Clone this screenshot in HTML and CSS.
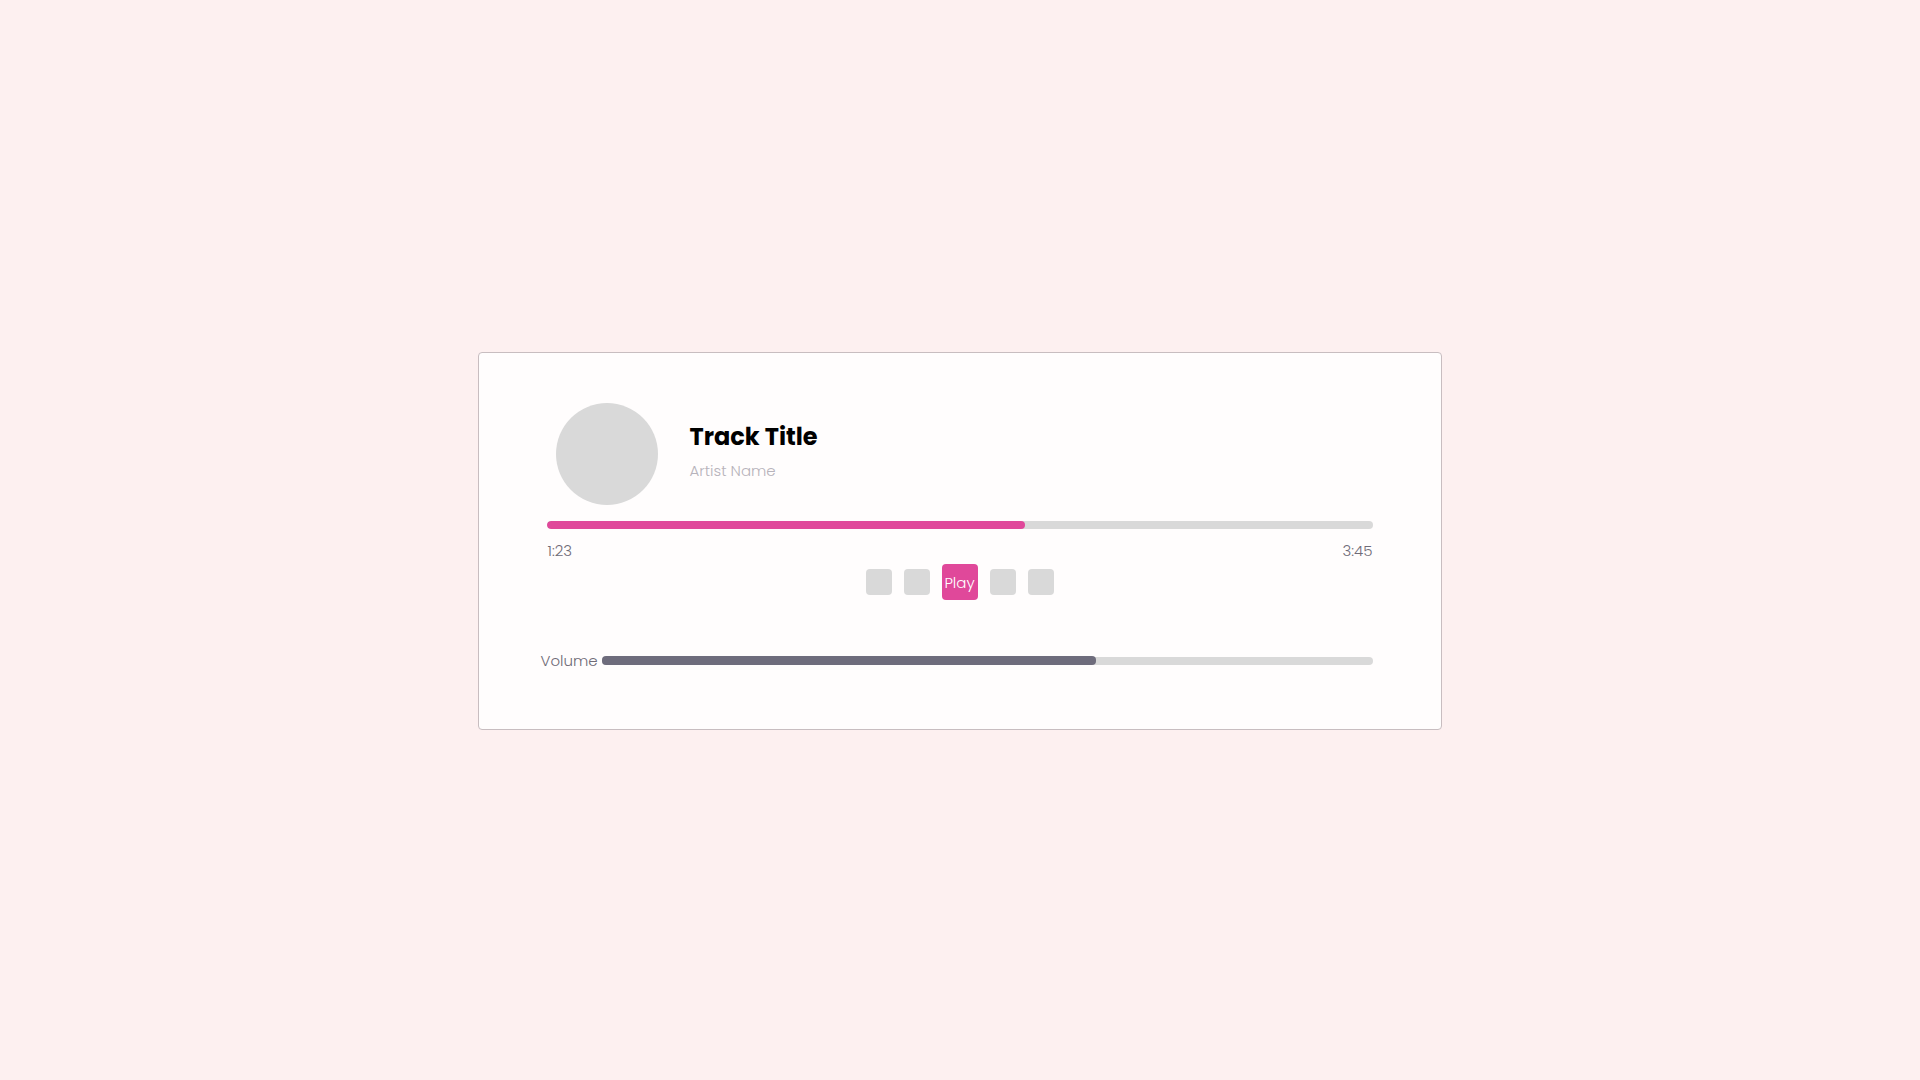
FILE: index.html
```html
<!DOCTYPE html>
<html lang="en">
<head>
  <meta charset="UTF-8" />
  <meta name="viewport" content="width=device-width, initial-scale=1.0"/>
  <title>Music Player</title>
  <link rel="stylesheet" href="styles.css">
</head>
<body>
  <div class="player">
    <div class="track-info">
      <div class="cover"></div>
      <div class="meta">
        <h1 class="title">Track Title</h1>
        <p class="artist">Artist Name</p>
      </div>
    </div>

    <div class="progress">
      <div class="progress-fill" style="width: 57.9%"></div>
    </div>
    <div class="times">
      <span>1:23</span>
      <span>3:45</span>
    </div>

    <div class="controls">
      <button class="ctrl"></button>
      <button class="ctrl"></button>
      <button class="play">Play</button>
      <button class="ctrl"></button>
      <button class="ctrl"></button>
    </div>

    <div class="volume">
      <span class="volume-label">Volume</span>
      <div class="volume-track">
        <div class="volume-fill" style="width: 64.1%"></div>
      </div>
    </div>
  </div>
</body>
</html>
```

FILE: styles.css
```css
body {
  font-family: "Poppins", "Open Sans", Arial, sans-serif;
  background-color: #fdf0f0;
  margin: 0;
  padding: 0;
  min-height: 100vh;
  display: flex;
  align-items: center;
  justify-content: center;
}

.player {
  box-sizing: border-box;
  width: 964px;
  background-color: #fffdfd;
  border: 1px solid #c8bdc0;
  border-radius: 4px;
  padding: 50px 68px 58px;
  margin-left: -1px;
  margin-top: 2px;
}

.track-info {
  display: flex;
  align-items: center;
  gap: 32px;
  padding: 0 9px;
}

.cover {
  width: 102px;
  height: 102px;
  border-radius: 50%;
  background-color: #d9d9d9;
  flex-shrink: 0;
}

.meta {
  padding-bottom: 6px;
}

.title {
  margin: 0 0 8px;
  font-size: 24px;
  font-weight: 700;
  line-height: 32px;
  color: #000;
}

.artist {
  margin: 0;
  font-size: 15px;
  font-weight: 300;
  line-height: 20px;
  color: #b7b3bb;
  margin-top: 1px;
}

.progress {
  margin-top: 16px;
  height: 8px;
  border-radius: 4px;
  background-color: #d9d9d9;
  overflow: hidden;
}

.progress-fill {
  height: 100%;
  background-color: #e0489a;
  border-radius: 4px;
}

.times {
  display: flex;
  justify-content: space-between;
  margin-top: 12px;
  padding: 0 0 0 1px;
  font-size: 15px;
  font-weight: 300;
  line-height: 20px;
  color: #6f6b77;
}

.controls {
  display: flex;
  justify-content: center;
  align-items: center;
  gap: 12px;
  margin-top: 3px;
}

.ctrl {
  width: 26px;
  height: 26px;
  padding: 0;
  border: none;
  border-radius: 4px;
  background-color: #d9d9d9;
}

.play {
  width: 36px;
  height: 36px;
  padding: 0;
  border: none;
  border-radius: 4px;
  background-color: #e0489a;
  color: #fff;
  font-family: inherit;
  font-size: 15px;
  font-weight: 300;
  white-space: nowrap;
  display: flex;
  align-items: center;
  justify-content: center;
}

.volume {
  display: flex;
  align-items: center;
  gap: 4px;
  margin-top: 51px;
  margin-left: -6px;
}

.volume-label {
  font-size: 15px;
  font-weight: 300;
  line-height: 20px;
  color: #6f6b77;
}

.volume-track {
  flex: 1;
  height: 8px;
  border-radius: 4px;
  background-color: #d9d9d9;
  display: flex;
  align-items: center;
}

.volume-fill {
  height: 9px;
  margin-top: -2px;
  border-radius: 4px;
  background-color: #6e6c7c;
}
```
